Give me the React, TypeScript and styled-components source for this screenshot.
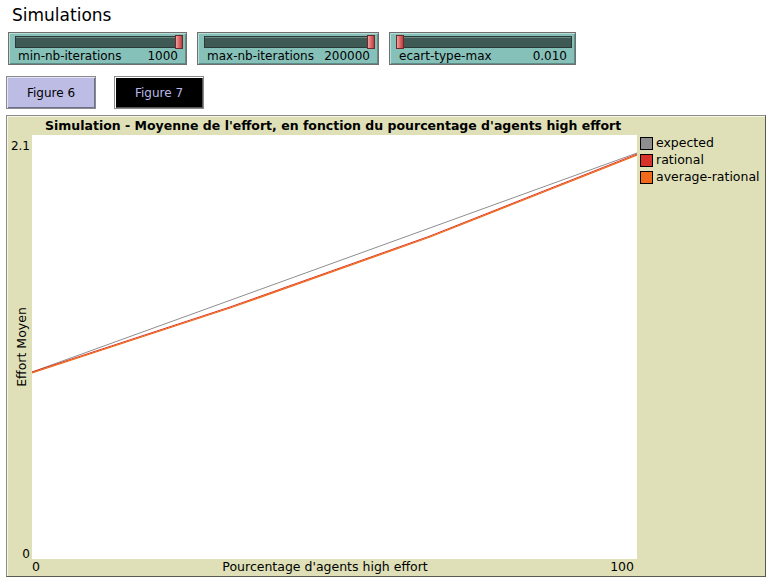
import React from "react";
import styled, { createGlobalStyle } from "styled-components";

const GlobalStyle = createGlobalStyle`
  html, body {
    margin: 0;
    padding: 0;
    background: #ffffff;
    font-family: "DejaVu Sans", Verdana, sans-serif;
  }
`;

const Page = styled.div`
  width: 770px;
  height: 583px;
  padding: 5px 4px 0 6px;
  box-sizing: border-box;
`;

const Title = styled.h1`
  margin: 0 0 6px 6px;
  font-size: 17px;
  line-height: 21px;
  font-weight: 400;
  color: #000;
`;

const SliderRow = styled.div`
  display: flex;
  gap: 10px;
  margin-left: 2px;
`;

const SliderBox = styled.div<{ $w: number }>`
  width: ${(p) => p.$w}px;
  height: 33px;
  box-sizing: border-box;
  background: #86c1b9;
  border: 1px solid #6f6f6f;
  box-shadow: inset 1px 1px 0 #b7dcd6, inset -1px -1px 0 #5c8f88;
  padding: 3px 3px 0 6px;
`;

const Track = styled.div`
  position: relative;
  height: 10px;
  background: #3f5a55;
  border: 1px solid #2a3a37;
  box-shadow: inset 0 1px 0 #6c8b86;
`;

const Thumb = styled.div<{ $atEnd: boolean }>`
  position: absolute;
  top: -2px;
  ${(p) => (p.$atEnd ? "right: -1px;" : "left: -1px;")}
  width: 6px;
  height: 12px;
  background: linear-gradient(to right, #f0a0a0, #d85f5f 60%, #b04343);
  border: 1px solid #6b2b2b;
`;

const SliderLabel = styled.div`
  display: flex;
  justify-content: space-between;
  padding: 0 5px 0 3px;
  margin-top: 1px;
  font-size: 12px;
  line-height: 14px;
  color: #000;
`;

const ButtonRow = styled.div`
  display: flex;
  gap: 18px;
  margin-top: 11px;
`;

const FigButton = styled.div<{ $dark?: boolean }>`
  width: 90px;
  height: 33px;
  box-sizing: border-box;
  display: flex;
  align-items: center;
  justify-content: center;
  font-size: 12px;
  background: ${(p) => (p.$dark ? "#000000" : "#bdbce5")};
  color: ${(p) => (p.$dark ? "#b9b8e8" : "#000000")};
  border: 1px solid #8a8a8a;
  box-shadow: ${(p) =>
    p.$dark
      ? "inset 1px 1px 0 #ffffff, inset -1px -1px 0 #555"
      : "inset 1px 1px 0 #e4e4f6, inset -1px -1px 0 #6e6e8e"};
`;

const PlotFrame = styled.div`
  margin-top: 6px;
  width: 760px;
  height: 462px;
  box-sizing: border-box;
  background: #dfe0b8;
  border: 1px solid #8c8c8c;
  border-right-color: #5a5a50;
  border-bottom-color: #5a5a50;
  box-shadow: inset 1px 1px 0 #f6f6e4;
  display: grid;
  grid-template-columns: 25px 605px 1fr;
  grid-template-rows: 19px 424px 1fr;
`;

const PlotTitle = styled.div`
  grid-column: 1 / 4;
  font-size: 12.5px;
  font-weight: 700;
  line-height: 19px;
  padding-left: 38px;
  white-space: nowrap;
  color: #000;
`;

const YAxis = styled.div`
  position: relative;
  font-size: 12px;
  color: #000;
`;

const YTick = styled.span<{ $bottom?: boolean }>`
  position: absolute;
  right: 2px;
  ${(p) => (p.$bottom ? "bottom: -2px;" : "top: 4px;")}
  line-height: 14px;
`;

const YLabel = styled.span`
  position: absolute;
  left: 50%;
  top: 50%;
  transform: translate(-50%, -50%) rotate(-90deg);
  white-space: nowrap;
  line-height: 14px;
  font-size: 12.5px;
  margin-left: 2px;
`;

const PlotArea = styled.div`
  background: #ffffff;
  position: relative;
`;

const Legend = styled.div`
  padding: 1px 0 0 3px;
  display: flex;
  flex-direction: column;
  gap: 3px;
`;

const LegendItem = styled.div`
  display: flex;
  align-items: center;
  gap: 3px;
  font-size: 12.5px;
  line-height: 14px;
  color: #000;
  white-space: nowrap;
`;

const Swatch = styled.span<{ $color: string }>`
  width: 11px;
  height: 11px;
  background: ${(p) => p.$color};
  border: 1px solid #000;
`;

const XAxis = styled.div`
  grid-column: 2 / 3;
  display: flex;
  justify-content: space-between;
  font-size: 12.5px;
  line-height: 15px;
  padding: 0 3px 0 0;
  color: #000;
`;

const sliders = [
  { name: "min-nb-iterations", value: "1000", w: 179, atEnd: true },
  { name: "max-nb-iterations", value: "200000", w: 182, atEnd: true },
  { name: "ecart-type-max", value: "0.010", w: 187, atEnd: false },
];

const legend = [
  { label: "expected", color: "#8e8e8e" },
  { label: "rational", color: "#d7332b" },
  { label: "average-rational", color: "#f1691a" },
];

export default function App() {
  return (
    <Page>
      <GlobalStyle />
      <Title>Simulations</Title>
      <SliderRow>
        {sliders.map((s) => (
          <SliderBox key={s.name} $w={s.w}>
            <Track>
              <Thumb $atEnd={s.atEnd} />
            </Track>
            <SliderLabel>
              <span>{s.name}</span>
              <span>{s.value}</span>
            </SliderLabel>
          </SliderBox>
        ))}
      </SliderRow>
      <ButtonRow>
        <FigButton>Figure 6</FigButton>
        <FigButton $dark>Figure 7</FigButton>
      </ButtonRow>
      <PlotFrame>
        <PlotTitle>
          Simulation - Moyenne de l'effort, en fonction du pourcentage d'agents high effort
        </PlotTitle>
        <YAxis>
          <YTick>2.1</YTick>
          <YLabel>Effort Moyen</YLabel>
          <YTick $bottom>0</YTick>
        </YAxis>
        <PlotArea>
          <svg width="605" height="424" viewBox="0 0 605 424">
            <polyline points="0,237 605,18" fill="none" stroke="#8e8e8e" strokeWidth="1" />
            <polyline
              points="0,237 198,172 398,101 605,19"
              fill="none"
              stroke="#d7332b"
              strokeWidth="1"
            />
            <polyline
              points="0,238 198,173 398,102 605,20"
              fill="none"
              stroke="#f1691a"
              strokeWidth="1.3"
            />
          </svg>
        </PlotArea>
        <Legend>
          {legend.map((l) => (
            <LegendItem key={l.label}>
              <Swatch $color={l.color} />
              {l.label}
            </LegendItem>
          ))}
        </Legend>
        <div />
        <XAxis>
          <span>0</span>
          <span>Pourcentage d'agents high effort</span>
          <span>100</span>
        </XAxis>
      </PlotFrame>
    </Page>
  );
}
